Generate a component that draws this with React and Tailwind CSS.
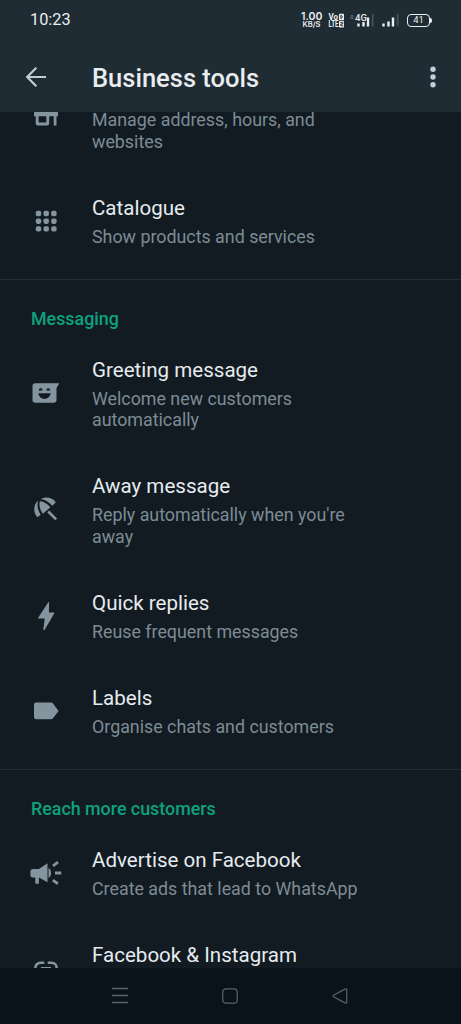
import React from 'react';

const StoreIcon = () => (
    <svg width="32" height="32" viewBox="0 0 32 32" fill="currentColor">
        <path d="M5 2.500h22V5H5zM5.500 7.500h21l1.500 6.500v3.300h-1.500v9.200h-2.800v-9.200h-4.500v7.200a2 2 0 0 1-2 2H7.700a2 2 0 0 1-2-2v-7.200H4V14zM8.600 17.300v6.200h7.700v-6.200z" fillRule="evenodd" />
    </svg>
);

const GridIcon = () => (
    <svg width="32" height="32" viewBox="0 0 32 32" fill="currentColor">
        {[5.8, 13.5, 21.2].map((y) =>
            [5.8, 13.5, 21.2].map((x) => (
                <rect key={`${x}-${y}`} x={x} y={y} width="5.4" height="5.4" rx="1.8" />
            ))
        )}
    </svg>
);

const GreetingIcon = () => (
    <svg width="32" height="32" viewBox="0 0 32 32">
        <path d="M5.200 6.200h24.100l-2.800 4.800v12a2.700 2.700 0 0 1-2.700 2.700H5.200A2.700 2.700 0 0 1 2.500 23V8.900a2.700 2.700 0 0 1 2.700-2.700z" fill="currentColor" />
        <path d="M8.300 16.300h12.400c-.6 3.400-3.100 5.700-6.200 5.700s-5.600-2.300-6.200-5.700z" fill="#121b22" />
        <path d="M9.200 13.400c.2-2.200 2.800-2.200 3 0M16.800 13.400c.2-2.200 2.800-2.200 3 0" fill="#121b22" stroke="#121b22" strokeWidth="1.100" />
    </svg>
);

const UmbrellaIcon = () => (
    <svg width="32" height="32" viewBox="0 0 32 32" fill="currentColor">
        <path d="M8.200 6.600C3.400 10.600 2.800 18.200 7.500 23.300l3.100-2.600C7.600 16 6.700 11.300 8.200 6.600z" />
        <path d="M9.900 7.200c-1.200 4.300.1 8.700 3 12.600l7.400-6.500c-3.200-3.800-6.300-5.900-10.400-6.100z" />
        <path d="M10.600 5.200c4.700-2.900 11.600-2 15.200 3l-3.500 3.600c-3.400-4.100-6.900-6.200-11.700-6.600z" />
        <path d="M17.300 18.400l1.900-1.900 7.900 7.900-1.900 1.900z" />
    </svg>
);

const BoltIcon = () => (
    <svg width="32" height="32" viewBox="0 0 32 32" fill="currentColor">
        <path d="M18.300 2.300h.8l-.2 10.200h4.800c.6 0 .8.500.5 1L14.500 30h-1.200l1.400-11.500H8.900c-.7 0-.9-.5-.6-1.100z" />
    </svg>
);

const LabelIcon = () => (
    <svg width="32" height="32" viewBox="0 0 32 32" fill="currentColor">
        <path d="M6.300 7.500h14.600c.9 0 1.600.4 2.100 1.100l5.600 7.300-5.600 7.300c-.5.700-1.200 1.100-2.100 1.100H6.300A2.300 2.300 0 0 1 4 22V9.800a2.300 2.300 0 0 1 2.300-2.300z" />
    </svg>
);

const MegaphoneIcon = () => (
    <svg width="34" height="32" viewBox="0 0 34 32" fill="currentColor">
        <path d="M4.200 12h5.700l8.600-5.700V25.300l-8.600-4.800v6.300H6.300v-6.300H4.200A2.800 2.800 0 0 1 1.400 17.700v-2.900A2.800 2.800 0 0 1 4.200 12z" />
        <path d="M19.500 10.800c3.400 2.200 3.400 8.500 0 10.200z" />
        <path d="M26 14.500h6.300v3.100H26zM23.200 7.700L28.200 4.100l1.600 2.200-5 3.600zM24.700 22.100l4.900 3.500-1.500 2.300-5-3.600z" />
    </svg>
);

const LinkIcon = () => (
    <svg width="32" height="32" viewBox="0 0 32 32" fill="none" stroke="currentColor" strokeWidth="2.600">
        <path d="M14.300 10.700h-3.700a5.300 5.300 0 0 0-5.300 5.300v.6a5.300 5.300 0 0 0 5.300 5.300h3.700M17.700 10.700h3.700a5.300 5.300 0 0 1 5.300 5.300v.6a5.300 5.300 0 0 1-5.300 5.300h-3.700M11 16.300h10" />
    </svg>
);

const MESSAGING = [
    { title: 'Greeting message', lines: ['Welcome new customers', 'automatically'], Icon: GreetingIcon },
    { title: 'Away message', lines: ["Reply automatically when you're", 'away'], Icon: UmbrellaIcon },
    { title: 'Quick replies', lines: ['Reuse frequent messages'], Icon: BoltIcon },
    { title: 'Labels', lines: ['Organise chats and customers'], Icon: LabelIcon },
];

const ToolRow = ({ title, lines, Icon }) => (
    <div className="flex shrink-0 items-center pt-[21.5px] pb-[22.6px]">
        <div className="flex w-[92px] shrink-0 justify-center pb-[2px] text-[#8595a0]">
            <Icon />
        </div>
        <div>
            <div className="h-[24.5px] text-[20.55px] leading-[24.5px] text-[#e6ebef]">{title}</div>
            <div className="mt-[5.4px] min-h-[21.3px] text-[17.83px] leading-[21.3px] text-[#7d8b95]">
                {lines.map((line) => (
                    <div key={line}>{line}</div>
                ))}
            </div>
        </div>
    </div>
);

const SectionTitle = ({ children }) => (
    <h2 className="mt-[9px] h-[57.5px] shrink-0 border-t border-[#232d35] pt-[26.8px] pl-[31px] text-[17.85px] leading-[24px] font-medium text-[#0ea17e]">
        {children}
    </h2>
);

const Signal = () => (
    <svg width="18" height="14" viewBox="0 0 18 14">
        <path d="M.3 10.500h2.400v3H.3zM5.300 8.500h2.400v5H5.300zM9.800 4.500h2.400v9H9.800z" fill="#e9eef0" />
        <path d="M14.800 1h1.800v12.500h-1.800z" fill="#46525a" />
    </svg>
);

const StatusBar = () => (
    <div className="flex h-10 items-center pl-[30px] text-[#e9eef0]">
        <span className="w-[271px] pt-px text-[16.3px]">10:23</span>
        <div className="w-[21px] text-center font-[Inter,sans-serif] font-semibold">
            <div className="h-[9px] text-[10.5px] leading-[9px]">1.00</div>
            <div className="h-[8px] text-[7.5px] leading-[8px]">KB/S</div>
        </div>
        <svg className="ml-[6px]" width="17" height="15" viewBox="0 0 17 15" fill="#e9eef0" fontFamily="Roboto, sans-serif" fontWeight="700" fontSize="9">
            <text x="0.500" y="7.200" textLength="9.500" lengthAdjust="spacingAndGlyphs">Vo</text>
            <text x="0.500" y="14.300" textLength="10" lengthAdjust="spacingAndGlyphs">LTE</text>
            <rect x="11" y=".7" width="5" height="6.500" rx=".6" />
            <rect x="11" y="7.900" width="5" height="6.500" rx=".6" />
            <path d="M12.800 2.400v3.100h.4c1.400 0 1.400-3.100 0-3.100zM12.300 9.400h2.400v1.600h-1.900v1.700h2.400" fill="none" stroke="#1f2c34" strokeWidth=".9" />
        </svg>
        <div className="relative ml-[12px] w-[18px]">
            <Signal />
            <span className="absolute top-0 -left-[2px] bg-[#1f2c34] text-[9.5px] leading-[9px] font-medium">4G</span>
            <svg className="absolute -left-[7px] top-[1px]" width="4" height="6" viewBox="0 0 4 6">
                <path d="M0 2.400L2 .4l2 2zM0 3.600l2 2 2-2z" fill="#65727a" />
            </svg>
        </div>
        <div className="ml-[7px]">
            <Signal />
        </div>
        <div className="ml-[7px] flex items-center">
            <div className="flex h-[13px] w-[23px] items-center justify-center rounded-[4px] border-[1.5px] border-[#e9eef0] text-[9.5px] leading-none">41</div>
            <div className="h-[5px] w-[2px] rounded-r bg-[#e9eef0]" />
        </div>
    </div>
);

const Header = () => (
    <header className="z-10 h-[112px] shrink-0 bg-[#1f2c34]">
        <StatusBar />
        <div className="flex h-[72px] items-center">
            <svg className="ml-[24px]" width="24" height="24" viewBox="0 0 24 24" fill="none" stroke="#c3ccd2" strokeWidth="2.200">
                <path d="M22 13H3.300M12.300 3.700L3.200 13l9.100 9.200" />
            </svg>
            <h1 className="ml-[44px] flex-1 pt-[3.500px] text-[25.5px] leading-[28px] font-medium text-[#e9edf0]">Business tools</h1>
            <svg className="mr-[21px]" width="14" height="26" viewBox="0 0 14 26" fill="#c3ccd8">
                <circle cx="7" cy="6.300" r="2.700" />
                <circle cx="7" cy="14" r="2.700" />
                <circle cx="7" cy="21.700" r="2.700" />
            </svg>
        </div>
    </header>
);

const NavBar = () => (
    <nav className="flex h-[56px] shrink-0 items-center justify-center gap-[94px] bg-[#0b131a] pr-px text-[#59626a]">
        <svg width="16" height="18" viewBox="0 0 16 18" stroke="currentColor" strokeWidth="1.300">
            <path d="M0 1.500h16M0 8.500h16M0 15.500h16" />
        </svg>
        <svg width="16" height="16" viewBox="0 0 16 16" fill="none" stroke="currentColor" strokeWidth="1.200">
            <rect x=".8" y=".8" width="14.400" height="14.400" rx="3.200" />
        </svg>
        <svg width="16" height="16" viewBox="0 0 16 16" fill="none" stroke="currentColor" strokeWidth="1.200">
            <path d="M1.500 7.200L13.400.900c.7-.4 1.400 0 1.400.800v12.600c0 .8-.7 1.200-1.400.8L1.500 8.800c-.7-.4-.7-1.200 0-1.600z" />
        </svg>
    </nav>
);

export default function App() {
    return (
        <div className="flex h-[1024px] w-[461px] flex-col overflow-hidden bg-[#121b22] font-[Roboto,sans-serif]">
            <Header />
            <main className="flex min-h-0 flex-1 flex-col overflow-hidden">
                <div className="-mt-[54px] flex flex-col">
                    <ToolRow lines={['Manage address, hours, and', 'websites']} Icon={StoreIcon} />
                    <ToolRow title="Catalogue" lines={['Show products and services']} Icon={GridIcon} />
                    <SectionTitle>Messaging</SectionTitle>
                    {MESSAGING.map((tool) => (
                        <ToolRow key={tool.title} {...tool} />
                    ))}
                    <SectionTitle>Reach more customers</SectionTitle>
                    <ToolRow title="Advertise on Facebook" lines={['Create ads that lead to WhatsApp']} Icon={MegaphoneIcon} />
                    <ToolRow title="Facebook & Instagram" lines={[]} Icon={LinkIcon} />
                </div>
            </main>
            <NavBar />
        </div>
    );
}
